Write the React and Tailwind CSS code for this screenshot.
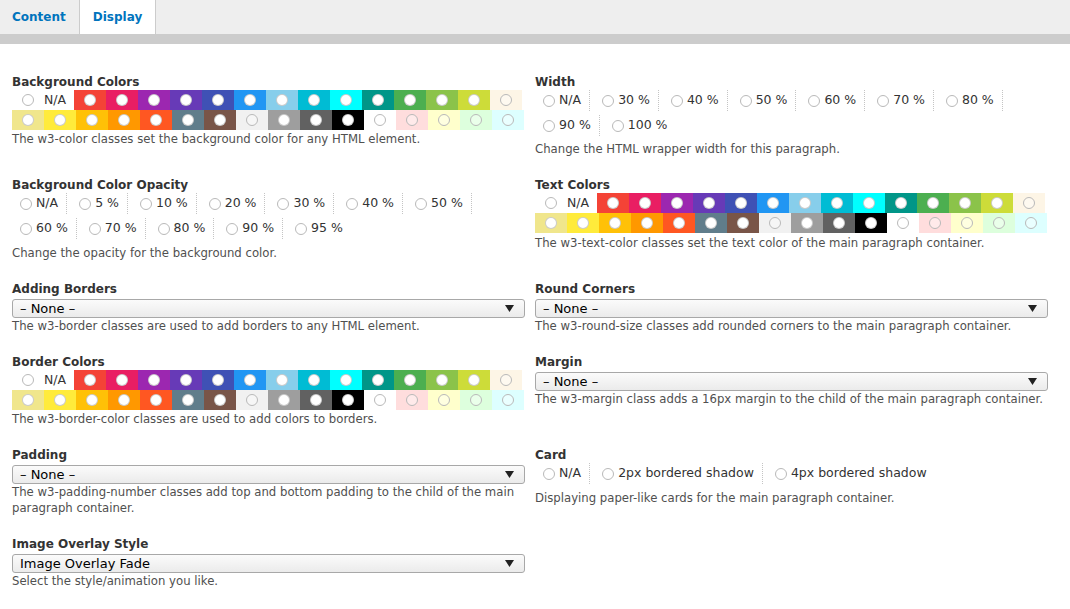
import React from "react";

// w3.css palette, first row follows the N/A cell
const ROW1 = [
  { bg: "bg-[#f44336]", light: false },
  { bg: "bg-[#e91e63]", light: false },
  { bg: "bg-[#9c27b0]", light: false },
  { bg: "bg-[#673ab7]", light: false },
  { bg: "bg-[#3f51b5]", light: false },
  { bg: "bg-[#2196f3]", light: false },
  { bg: "bg-[#87ceeb]", light: false },
  { bg: "bg-[#00bcd4]", light: false },
  { bg: "bg-[#00ffff]", light: false },
  { bg: "bg-[#009688]", light: false },
  { bg: "bg-[#4caf50]", light: false },
  { bg: "bg-[#8bc34a]", light: false },
  { bg: "bg-[#cddc39]", light: false },
  { bg: "bg-[#fdf5e6]", light: true },
];

const ROW2 = [
  { bg: "bg-[#f0e68c]", light: false },
  { bg: "bg-[#ffeb3b]", light: false },
  { bg: "bg-[#ffc107]", light: false },
  { bg: "bg-[#ff9800]", light: false },
  { bg: "bg-[#ff5722]", light: false },
  { bg: "bg-[#607d8b]", light: false },
  { bg: "bg-[#795548]", light: false },
  { bg: "bg-[#f1f1f1]", light: true },
  { bg: "bg-[#9e9e9e]", light: false },
  { bg: "bg-[#616161]", light: false },
  { bg: "bg-[#000000]", light: false },
  { bg: "bg-[#ffffff]", light: true },
  { bg: "bg-[#ffdddd]", light: true },
  { bg: "bg-[#ffffcc]", light: true },
  { bg: "bg-[#ddffdd]", light: true },
  { bg: "bg-[#ddffff]", light: true },
];

function Radio({ solid = false }) {
  return (
    <span
      className={
        solid
          ? "block h-[12px] w-[12px] shrink-0 rounded-full border border-black/20 bg-white"
          : "block h-[12px] w-[12px] shrink-0 rounded-full border border-[#b9b9b9] bg-white/40"
      }
    />
  );
}

function ColorGrid() {
  return (
    <div className="w-[512px]">
      <div className="flex h-[20px]">
        <div className="flex h-[20px] w-[62px] items-center">
          <span className="flex w-[32px] justify-center">
            <Radio />
          </span>
          <span className="text-[12.5px] text-[#333]">N/A</span>
        </div>
        {ROW1.map((c, i) => (
          <div key={i} className={"flex h-[20px] w-[32px] items-center justify-center " + c.bg}>
            <Radio solid={!c.light} />
          </div>
        ))}
      </div>
      <div className="flex h-[20px]">
        {ROW2.map((c, i) => (
          <div key={i} className={"flex h-[20px] w-[32px] items-center justify-center " + c.bg}>
            <Radio solid={!c.light} />
          </div>
        ))}
      </div>
    </div>
  );
}

function RadioRow({ options }) {
  return (
    <div className="flex flex-wrap gap-y-[4px]">
      {options.map((o, i) => (
        <div
          key={o}
          className={
            i < options.length - 1
              ? "mr-1 flex h-[21px] items-center gap-[4px] border-r border-dotted border-[#c4c4c4] px-2"
              : "mr-1 flex h-[21px] items-center gap-[4px] px-2"
          }
        >
          <Radio />
          <span className="whitespace-nowrap text-[12.5px] text-[#333]">{o}</span>
        </div>
      ))}
    </div>
  );
}

function Select({ value }) {
  return (
    <div className="mt-[2px] flex h-[19px] items-center justify-between rounded-[3px] border border-[#a8a8a8] bg-gradient-to-b from-[#fbfbfb] to-[#ebebeb] pl-[7px] pr-[10px]">
      <span className="whitespace-nowrap text-[13px] leading-none text-black">{value}</span>
      <svg width="9" height="7" viewBox="0 0 9 7">
        <polygon points="0,0 9,0 4.5,7" fill="#222" />
      </svg>
    </div>
  );
}

function Field({ label, children }) {
  return (
    <div className="flex flex-col">
      <div className="text-[12px] font-bold leading-[16px] text-[#333]">{label}</div>
      {children}
    </div>
  );
}

function Desc({ children, className = "" }) {
  return (
    <div className={"whitespace-nowrap text-[11.7px] leading-[16px] text-[#505050] " + className}>
      {children}
    </div>
  );
}

export default function App() {
  return (
    <div className="min-h-[609px] w-[1070px] bg-white font-['DejaVu_Sans',sans-serif]">
      {/* tab strip */}
      <div className="flex h-[34px] bg-[#eeeeee]">
        <div className="flex items-center pl-[12px] pr-[13px] text-[12px] font-bold text-[#0074bd]">
          Content
        </div>
        <div className="flex items-center border-x border-[#cccccc] bg-white px-[13px] text-[12px] font-bold text-[#0074bd]">
          Display
        </div>
      </div>
      <div className="h-[10px] bg-[#cccccc]" />

      <div className="grid grid-cols-[513px_513px] gap-x-[10px] gap-y-[20px] pl-[12px] pt-[30px]">
        <Field label="Background Colors">
          <ColorGrid />
          <Desc className="mt-[1px]">The w3-color classes set the background color for any HTML element.</Desc>
        </Field>
        <Field label="Width">
          <RadioRow options={["N/A", "30 %", "40 %", "50 %", "60 %", "70 %", "80 %", "90 %", "100 %"]} />
          <Desc className="mt-[5px]">Change the HTML wrapper width for this paragraph.</Desc>
        </Field>

        <Field label="Background Color Opacity">
          <RadioRow
            options={["N/A", "5 %", "10 %", "20 %", "30 %", "40 %", "50 %", "60 %", "70 %", "80 %", "90 %", "95 %"]}
          />
          <Desc className="mt-[6px]">Change the opacity for the background color.</Desc>
        </Field>
        <Field label="Text Colors">
          <ColorGrid />
          <Desc className="mt-[2px]">The w3-text-color classes set the text color of the main paragraph container.</Desc>
        </Field>

        <Field label="Adding Borders">
          <Select value="– None –" />
          <Desc>The w3-border classes are used to add borders to any HTML element.</Desc>
        </Field>
        <Field label="Round Corners">
          <Select value="– None –" />
          <Desc>The w3-round-size classes add rounded corners to the main paragraph container.</Desc>
        </Field>

        <Field label="Border Colors">
          <ColorGrid />
          <Desc className="mt-[1px]">The w3-border-color classes are used to add colors to borders.</Desc>
        </Field>
        <Field label="Margin">
          <Select value="– None –" />
          <Desc>The w3-margin class adds a 16px margin to the child of the main paragraph container.</Desc>
        </Field>

        <Field label="Padding">
          <Select value="– None –" />
          <Desc>
            The w3-padding-number classes add top and bottom padding to the child of the main
            <br />
            paragraph container.
          </Desc>
        </Field>
        <Field label="Card">
          <RadioRow options={["N/A", "2px bordered shadow", "4px bordered shadow"]} />
          <Desc className="mt-[6px]">Displaying paper-like cards for the main paragraph container.</Desc>
        </Field>

        <Field label="Image Overlay Style">
          <Select value="Image Overlay Fade" />
          <Desc>Select the style/animation you like.</Desc>
        </Field>
      </div>
    </div>
  );
}
